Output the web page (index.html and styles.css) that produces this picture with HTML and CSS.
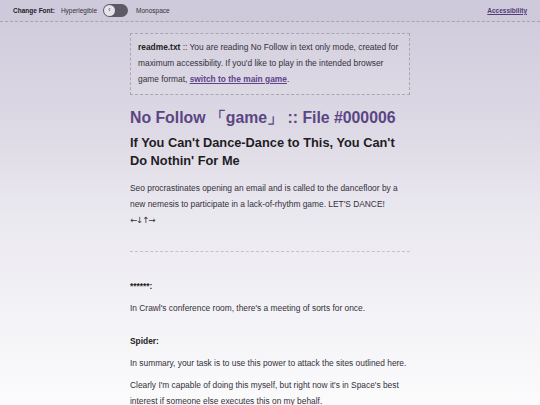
FILE: index.html
```html
<!DOCTYPE html>
<html>
<head>
<meta charset="utf-8">
<link rel="stylesheet" href="styles.css">
</head>
<body>
<header class="topbar">
  <div class="font-switch">
    <span class="label">Change Font:</span>
    <span class="opt">Hyperlegible</span>
    <span class="toggle"><span class="knob">‹</span></span>
    <span class="opt">Monospace</span>
  </div>
  <a class="a11y" href="#">Accessibility</a>
</header>
<main class="page">
  <div class="readme">
    <b>readme.txt</b> :: You are reading No Follow in text only mode, created for maximum accessibility. If you'd like to play in the intended browser game format, <a class="link" href="#">switch to the main game</a>.
  </div>
  <h1 class="title">No Follow 「game」 :: File #000006</h1>
  <h2 class="subtitle">If You Can't Dance-Dance to This, You Can't Do Nothin' For Me</h2>
  <p class="summary">Seo procrastinates opening an email and is called to the dancefloor by a new nemesis to participate in a lack-of-rhythm game. LET'S DANCE!<br><span class="arrows">←↓↑→</span></p>
  <hr class="divider">
  <p class="speaker first">******:</p>
  <p class="line">In Crawl's conference room, there's a meeting of sorts for once.</p>
  <p class="speaker">Spider:</p>
  <p class="line">In summary, your task is to use this power to attack the sites outlined here.</p>
  <p class="line">Clearly I'm capable of doing this myself, but right now it's in Space's best interest if someone else executes this on my behalf.</p>
</main>
</body>
</html>
```
FILE: styles.css
```css
html, body {
  margin: 0;
  padding: 0;
}
body {
  min-height: 405px;
  font-family: "Liberation Sans", Arial, sans-serif;
  font-size: 8.4px;
  color: #34313a;
  background: linear-gradient(to bottom, #cfcadb 0px, #dcd8e4 120px, #ebe9f0 220px, #fbfbfc 405px);
}
.topbar {
  height: 22px;
  box-sizing: border-box;
  border-bottom: 1px dashed #a9a5b0;
  display: flex;
  align-items: center;
  justify-content: space-between;
  padding: 0 13px 1px 13px;
  background: #cfcadb;
  font-size: 6.5px;
}
.font-switch {
  display: flex;
  align-items: center;
}
.label {
  font-weight: bold;
  color: #222;
  margin-right: 6px;
}
.opt {
  color: #333;
}
.toggle {
  width: 25px;
  height: 13px;
  border-radius: 7px;
  background: #5e5966;
  margin: 0 8px 0 6px;
  display: flex;
  align-items: center;
  padding-left: 1px;
  box-sizing: border-box;
}
.knob {
  width: 11px;
  height: 11px;
  border-radius: 50%;
  background: #e6e3ea;
  color: #444;
  font-size: 7px;
  line-height: 10px;
  text-align: center;
}
.a11y {
  color: #4f3d73;
  font-weight: bold;
  text-decoration: underline;
  font-size: 6.5px;
}
.page {
  width: 280px;
  margin: 0 auto;
  padding-top: 11px;
}
.readme {
  border: 1px dashed #aaa6b0;
  padding: 5px 7px 7px 7px;
  line-height: 16px;
  font-size: 8.4px;
  background: rgba(255,255,255,0.08);
}
.readme b {
  color: #222;
}
.link {
  color: #5f4589;
  font-weight: bold;
  text-decoration: underline;
}
.title {
  margin: 13px 0 6px 0;
  font-size: 15.8px;
  line-height: 20px;
  color: #5a4683;
  font-weight: bold;
  white-space: nowrap;
}
.subtitle {
  margin: 0;
  font-size: 12.8px;
  line-height: 18px;
  color: #1f1d24;
  font-weight: bold;
}
.summary {
  margin: 10px 0 0 0;
  line-height: 16px;
}
.arrows {
  font-family: "DejaVu Sans", sans-serif;
  font-size: 8.5px;
  letter-spacing: -1px;
}
.divider {
  border: 0;
  border-top: 1px dashed #c4c1ca;
  margin: 23px 0 0 0;
  height: 0;
}
.speaker {
  margin: 17px 0 0 0;
  line-height: 16px;
  font-weight: bold;
  color: #222;
}
.speaker.first {
  margin-top: 26px;
}
.line {
  margin: 6px 0 0 0;
  line-height: 16px;
}
```
